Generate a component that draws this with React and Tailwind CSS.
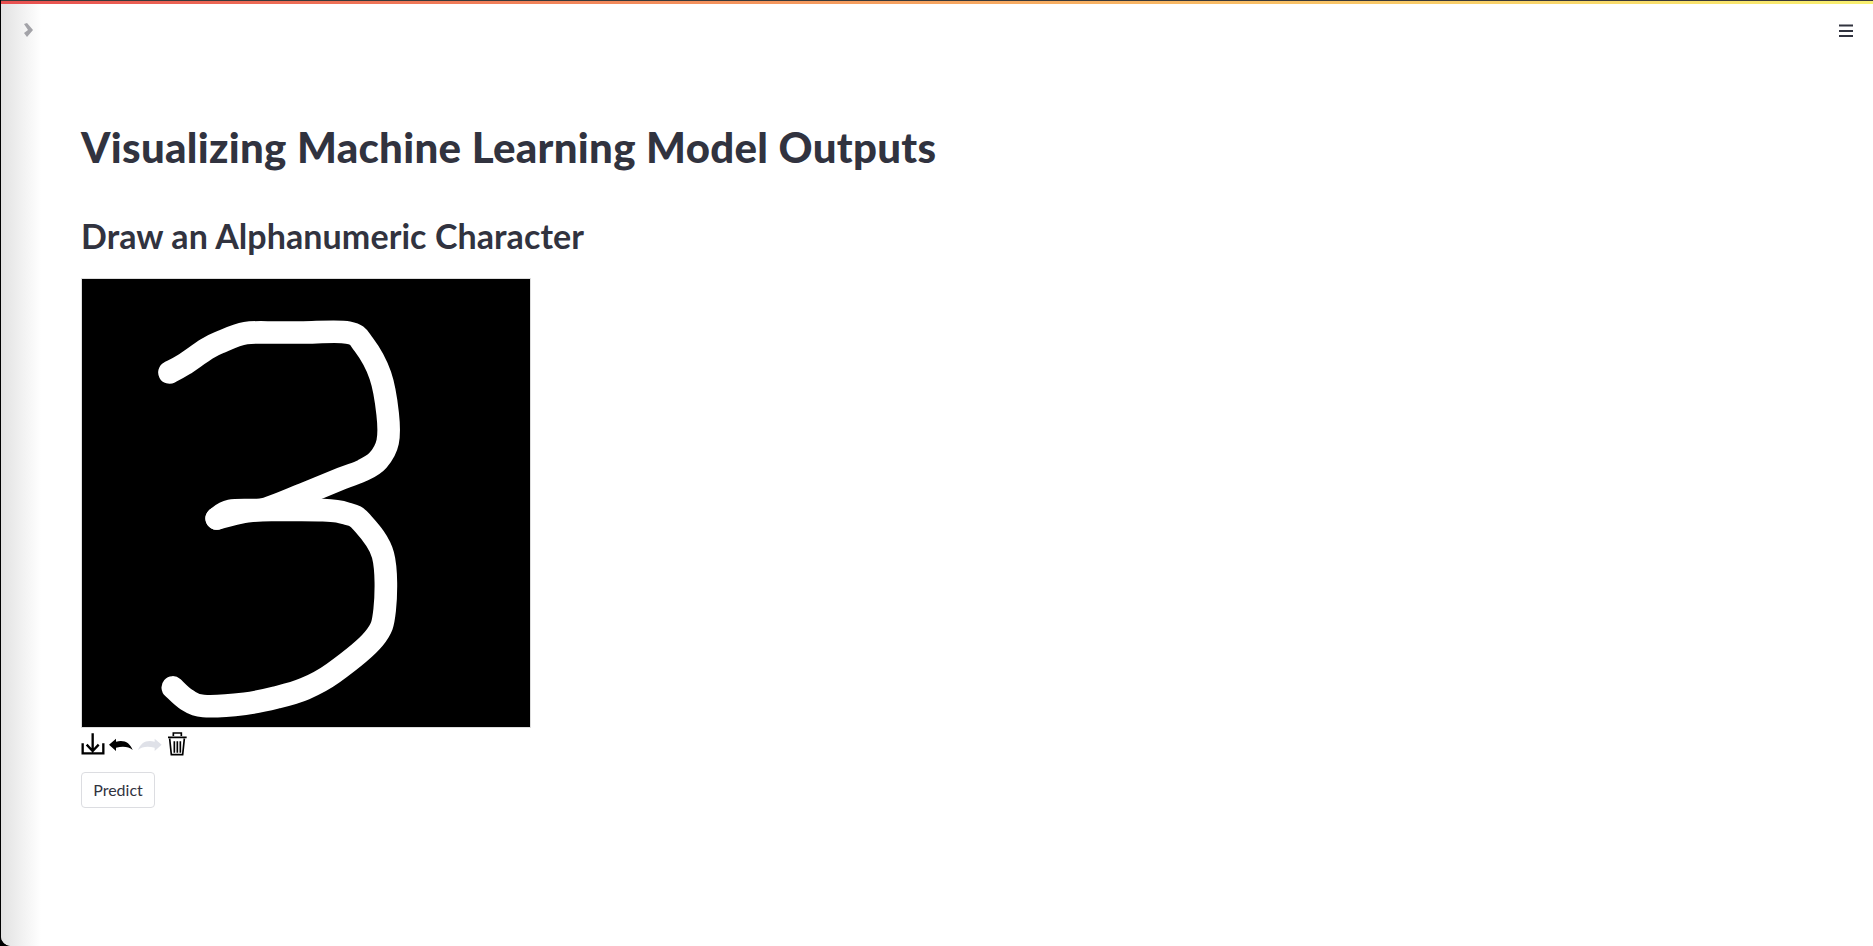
const topStroke = [
  [298, 306], [340, 283], [410, 235], [450, 215], [527, 188], [620, 186], [700, 186], [835, 186], [882, 222], [932, 315],
  [954, 430], [954, 515], [925, 570], [880, 600], [815, 625], [700, 672], [590, 715], [520, 725], [440, 745],
];
const lowStroke = [
  [440, 745], [480, 722], [575, 720], [760, 720], [830, 730], [875, 755], [940, 855], [945, 1020],
  [912, 1107], [790, 1210], [705, 1257], [620, 1283], [525, 1302], [400, 1309], [350, 1290], [308, 1253],
];

// catmull-rom through the points, so the hand drawn line has no corners
function smooth(pts) {
  let d = `M${pts[0][0]} ${pts[0][1]}`;
  for (let i = 0; i < pts.length - 1; i++) {
    const a = pts[i - 1] || pts[i];
    const b = pts[i];
    const c = pts[i + 1];
    const e = pts[i + 2] || c;
    d += ` C${b[0] + (c[0] - a[0]) / 6} ${b[1] + (c[1] - a[1]) / 6} ${c[0] - (e[0] - b[0]) / 6} ${c[1] - (e[1] - b[1]) / 6} ${c[0]} ${c[1]}`;
  }
  return d;
}

export default function App() {
  return (
    <div className="h-[946px] bg-black pl-px">
      <div className="relative h-full overflow-hidden rounded-bl-[10px] bg-white font-['Lato',sans-serif] text-[#31333f]">
        <div className="absolute left-0 top-0 bottom-0 w-10 bg-gradient-to-r from-[#e2e2e2] to-white" />
        <div className="relative h-1 border-t border-[#3a3a3a] bg-gradient-to-r from-[#e85050] to-[#f8f070]" />

        <div className="relative flex items-start justify-between pl-[23px] pr-[20px] pt-[19px]">
          <svg viewBox="0 0 9 14" className="h-[14px] w-[9px] fill-[#a3a3a8]">
            <path d="M0 1 L3 0 L9 7 L3 14 L0 10 L4 7 Z" />
          </svg>
          <svg viewBox="0 0 14 14" className="mt-px h-[14px] w-[14px] fill-[#31333f]">
            <rect x="0" y="0.5" width="14" height="2" />
            <rect x="0" y="6" width="14" height="2" />
            <rect x="0" y="11" width="14" height="2" />
          </svg>
        </div>

        <div className="relative pl-[80px] pt-[79px]">
          <h1 className="text-[42px] font-black leading-[60px] tracking-[0.3px]">
            Visualizing Machine Learning Model Outputs
          </h1>
          <h2 className="mt-[35px] text-[34px] font-bold leading-[48px] tracking-[0.08px]">
            Draw an Alphanumeric Character
          </h2>
          <svg
            viewBox="35 25 1347 1347"
            className="mt-[18px] block h-[450px] w-[450px] border border-[#dddddd] bg-black"
          >
            {[topStroke, lowStroke].map((pts, i) => (
              <path
                key={i}
                d={smooth(pts)}
                fill="none"
                stroke="white"
                strokeWidth="68"
                strokeLinecap="round"
                strokeLinejoin="round"
              />
            ))}
          </svg>
          <div className="mt-[2px] flex h-7">
            <svg viewBox="33 30 84 84" className="h-7 w-7" fill="none" stroke="black" strokeWidth="7">
              <path d="M68 40 V92 M50 74 L68 93 L86 74 M38 70 V100 H100 V70" />
            </svg>
            <svg viewBox="117 30 84 84" className="h-7 w-7" fill="black">
              <path d="M117 74 L138 56 V65 C162 58 180 68 188 90 C176 80 160 78 138 83 V93 Z" />
            </svg>
            <svg viewBox="201 30 84 84" className="h-7 w-7" fill="#dfe1e8">
              <path d="M275 74 L254 56 V65 C230 58 212 68 204 90 C216 80 232 78 254 83 V93 Z" />
            </svg>
            <svg viewBox="285 30 84 84" className="h-7 w-7" fill="none" stroke="black" strokeWidth="5">
              <path d="M294 52 H350 M310 48 V39 H334 V48 M299 56 L304 104 H338 L343 56 M313 64 V98 M322 64 V98 M331 64 V98" />
            </svg>
          </div>
          <button className="mt-[14px] h-9 w-[74px] rounded border border-[#dcdde1] text-[16px] leading-none">
            Predict
          </button>
        </div>
      </div>
    </div>
  );
}
